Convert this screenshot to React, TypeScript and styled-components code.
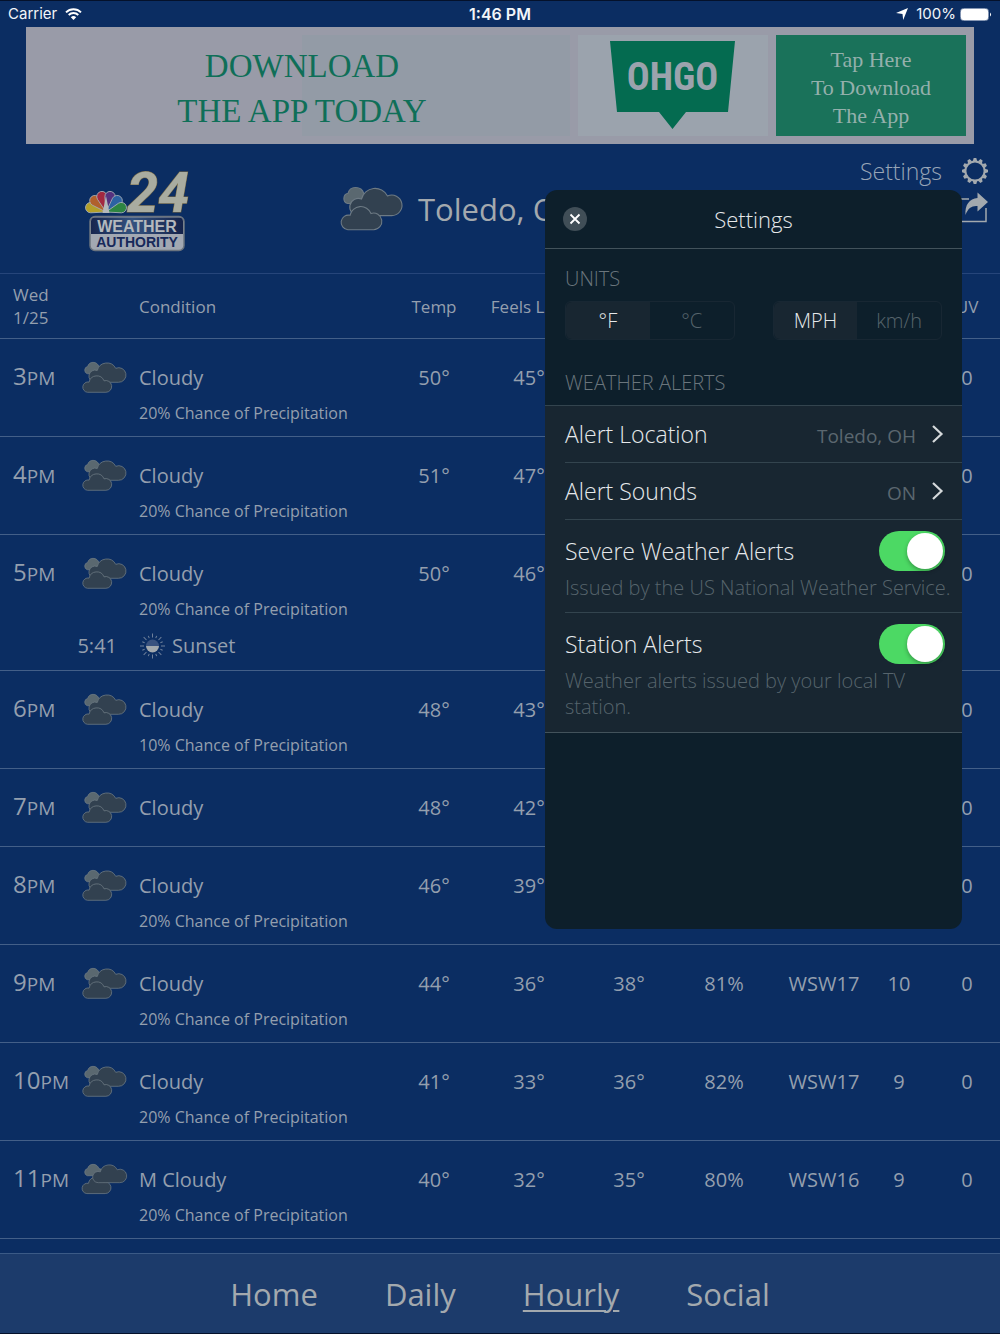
import React, { useState } from "react";
import styled, { createGlobalStyle } from "styled-components";

const color = {
  page: "#0b2d62",
  text: "#949fae",
  textStrong: "#a3a9ae",
  line: "#435f88",
  footer: "#1c3b6b",
  panel: "#0d1f2b",
  panelRow: "#182631",
  panelLine: "#33444e",
  panelText: "#e6e9eb",
  panelMuted: "#6a757c",
  panelFaint: "#56646c",
  green: "#4cd964",
};

const GlobalStyle = createGlobalStyle`
  *, *::before, *::after { box-sizing: border-box; }
  body {
    margin: 0;
    background: ${color.page};
    color: ${color.text};
    font-family: "Open Sans", "Noto Sans", sans-serif;
  }
  button, input { font: inherit; color: inherit; }
`;

const Page = styled.div`
  position: relative;
  display: flex;
  flex-direction: column;
  min-height: 100vh;
  border-top: 1px solid #04112b;
  border-bottom: 1px solid #04112b;
`;

const StatusBar = styled.div`
  display: grid;
  grid-template-columns: 1fr auto 1fr;
  align-items: center;
  height: 26px;
  padding: 0 8px;
  color: #f2f5f9;
  font: 400 15px/24px Inter, "Liberation Sans", sans-serif;
`;

const StatusGroup = styled.div<{ $end?: boolean }>`
  display: flex;
  align-items: center;
  justify-content: ${(p) => (p.$end ? "flex-end" : "flex-start")};
  gap: ${(p) => (p.$end ? 4 : 8)}px;
`;

const Clock = styled.span`
  font-size: 16px;
  font-weight: 600;
`;

const Banner = styled.a`
  display: flex;
  align-items: stretch;
  gap: 8px;
  height: 117px;
  margin: 0 26px;
  padding: 8px;
  background: #999ba8;
  text-decoration: none;
  font-family: "Liberation Serif", serif;
`;

const BannerTitle = styled.span`
  display: flex;
  flex: 1;
  flex-direction: column;
  justify-content: center;
  padding-top: 6px;
  background: linear-gradient(90deg, #999ba8 50%, #939ba6 50%);
  color: #0f6f58;
  font-size: 33px;
  line-height: 45px;
  text-align: center;
`;

const BannerLogo = styled.span`
  display: flex;
  justify-content: center;
  width: 190px;
  padding-top: 6px;
  background: #9ba3ad;
`;

const BannerAction = styled.span`
  display: flex;
  flex-direction: column;
  justify-content: center;
  width: 190px;
  padding-top: 4px;
  background: #1a725a;
  color: #94b0ac;
  font-size: 22px;
  line-height: 28px;
  text-align: center;
`;

const Header = styled.header`
  display: grid;
  grid-template-columns: 34% 1fr auto;
  height: 130px;
  border-bottom: 1px solid #26457a;
`;

const LogoBox = styled.div`
  padding: 13px 0 0 85px;
`;

const Place = styled.h1`
  display: flex;
  align-items: center;
  gap: 16px;
  height: 130px;
  margin: 0;
  color: ${color.textStrong};
  font-size: 31px;
  font-weight: 400;
  line-height: 44px;
`;

const Actions = styled.div`
  display: flex;
  flex-direction: column;
  align-items: flex-end;
  gap: 5px;
  padding: 11px 12px 0 0;
`;

const ActionButton = styled.button`
  display: flex;
  align-items: center;
  gap: 20px;
  padding: 0;
  border: 0;
  background: none;
  color: #98a5b7;
  font-size: 23px;
  font-weight: 300;
  line-height: 32px;
`;

const Table = styled.table`
  width: 100%;
  table-layout: fixed;
  border-collapse: separate;
  border-spacing: 0;
  font-size: 20px;
  line-height: 28px;
`;

const Col = styled.col<{ $w?: string }>`
  width: ${(p) => p.$w ?? "auto"};
`;

const HeadCell = styled.th<{ $left?: boolean }>`
  height: 65px;
  padding: 0 0 0 ${(p) => (p.$left ? 13 : 0)}px;
  border-bottom: 1px solid ${color.line};
  font-size: 17px;
  font-weight: 400;
  line-height: 23px;
  text-align: ${(p) => (p.$left ? "left" : "center")};
  white-space: nowrap;

  &:last-child { padding-left: 20px; }
`;

const Cell = styled.td<{ $open?: boolean }>`
  padding: 25px 0 24px;
  border-bottom: ${(p) => (p.$open ? "0" : `1px solid ${color.line}`)};
  text-align: center;
  vertical-align: top;
  white-space: nowrap;

  &:last-child { padding-left: 20px; }
`;

const TimeCell = styled(Cell).attrs({ as: "th", scope: "row" })`
  padding-top: 23px;
  padding-left: 13px;
  font-size: 24px;
  font-weight: 400;
  text-align: left;

  small {
    font-size: 19px;
    line-height: 19px;
  }
`;

const IconCell = styled(Cell)`
  padding-top: 23px;
  padding-bottom: 0;
  text-align: left;

  svg { display: block; }
`;

const ConditionCell = styled(Cell)<{ $detailed?: boolean }>`
  padding-left: 13px;
  padding-bottom: ${(p) => (p.$detailed ? 11 : 24)}px;
  text-align: left;
`;

const Detail = styled.div`
  padding-top: 9px;
  font-size: 16px;
  line-height: 24px;
`;

const EventCell = styled(Cell)<{ $align: "left" | "right" }>`
  padding: 0 ${(p) => (p.$align === "right" ? 9 : 0)}px 10px ${(p) => (p.$align === "left" ? 13 : 0)}px;
  text-align: ${(p) => p.$align};

  &:last-child { padding-left: 13px; }
`;

const EventLabel = styled.span`
  display: flex;
  align-items: center;
  gap: 6px;
`;

const Footer = styled.nav`
  display: flex;
  align-items: center;
  justify-content: center;
  gap: 67px;
  height: 80px;
  margin-top: auto;
  border-top: 1px solid #3b5a86;
  background: ${color.footer};
`;

const NavLink = styled.a<{ $current?: boolean }>`
  color: ${color.textStrong};
  font-size: 31px;
  line-height: 44px;
  text-decoration: ${(p) => (p.$current ? "underline" : "none")};
  text-decoration-thickness: 2px;
  text-underline-offset: 4px;
`;

const Panel = styled.section`
  position: absolute;
  top: 189px;
  right: 38px;
  width: 417px;
  height: 739px;
  overflow: hidden;
  border-radius: 12px;
  background: ${color.panel};
  color: ${color.panelText};
  font-weight: 300;
`;

const PanelHeader = styled.div`
  display: grid;
  grid-template-columns: 24px 1fr 24px;
  align-items: center;
  height: 59px;
  padding: 0 18px;
  border-bottom: 1px solid #42525b;
`;

const PanelTitle = styled.h2`
  margin: 0;
  font-size: 22px;
  font-weight: 300;
  line-height: 30px;
  text-align: center;
`;

const CloseButton = styled.button`
  display: grid;
  place-items: center;
  width: 24px;
  height: 24px;
  padding: 0;
  border: 0;
  border-radius: 50%;
  background: #404e57;
  color: #fff;
`;

const Units = styled.div`
  display: grid;
  grid-template-columns: 1fr 1fr;
  gap: 8px 38px;
  padding: 16px 20px 0;
`;

const SectionTitle = styled.h3<{ $wide?: boolean }>`
  grid-column: 1 / -1;
  margin: 0;
  padding: ${(p) => (p.$wide ? "29px 20px 8px" : "0")};
  color: ${color.panelMuted};
  font-size: 20px;
  font-weight: 300;
  line-height: 28px;
`;

const Segments = styled.fieldset`
  display: grid;
  grid-template-columns: 1fr 1fr;
  min-width: 0;
  height: 39px;
  margin: 0;
  padding: 0;
  overflow: hidden;
  border: 1px solid #182733;
  border-radius: 6px;
`;

const Segment = styled.label<{ $on: boolean }>`
  position: relative;
  display: grid;
  place-items: center;
  background: ${(p) => (p.$on ? color.panelRow : "transparent")};
  color: ${(p) => (p.$on ? color.panelText : color.panelFaint)};
  font-size: 20px;
  line-height: 28px;

  input {
    position: absolute;
    inset: 0;
    width: 100%;
    height: 100%;
    margin: 0;
    opacity: 0;
  }
`;

const AlertList = styled.div`
  padding-left: 20px;
  border-top: 1px solid ${color.panelLine};
  border-bottom: 1px solid #42525b;
  background: ${color.panelRow};
`;

const LinkRow = styled.button`
  display: flex;
  align-items: center;
  width: 100%;
  height: 57px;
  padding: 0 18px 0 0;
  border: 0;
  border-bottom: 1px solid ${color.panelLine};
  background: none;
  font-size: 23px;
  font-weight: 300;
  line-height: 32px;
  text-align: left;
`;

const RowValue = styled.span`
  margin-left: auto;
  padding: 3px 15px 0 0;
  color: #5b676f;
  font-size: 19px;
  font-weight: 400;
`;

const ToggleRow = styled.div<{ $last?: boolean }>`
  padding: 11px 0 ${(p) => (p.$last ? 12 : 11)}px;
  border-bottom: ${(p) => (p.$last ? "0" : `1px solid ${color.panelLine}`)};
`;

const ToggleLine = styled.label`
  display: flex;
  align-items: center;
  justify-content: space-between;
  height: 40px;
  padding-right: 17px;
  font-size: 23px;
  line-height: 32px;
`;

const Note = styled.p`
  margin: 0;
  padding-top: 4px;
  color: ${color.panelFaint};
  font-size: 20px;
  line-height: 26px;
`;

const Switch = styled.input`
  appearance: none;
  display: flex;
  flex: none;
  width: 66px;
  height: 40px;
  margin: 0;
  padding: 2px;
  border-radius: 20px;
  background: #3a4650;

  &::before {
    content: "";
    width: 36px;
    height: 36px;
    border-radius: 50%;
    background: #fff;
    box-shadow: 0 2px 4px rgba(0, 0, 0, 0.3);
  }
  &:checked {
    justify-content: flex-end;
    background: ${color.green};
  }
`;

const BACK = "M7.5 16.5A5.3 5.3 0 0 1 8 6.3C9 2.5 12 .5 15.5 .5c4.200 0 7.300 2.500 8.300 6a5 5 0 0 1 0 10Z";
const MAIN = "M18.3 28.6A8.600 8.600 0 1 1 21.500 12A14 14 0 0 1 47.500 8.900A10.300 10.300 0 1 1 51.300 28.600Z";
const FRONT = "M7.800 42.700A7.300 7.300 0 1 1 10 28.300A11 11 0 0 1 31 26.500A8.300 8.300 0 1 1 33.700 42.700Z";

function Clouds({ width, mostly }: { width: number; mostly?: boolean }) {
  return (
    <svg width={width} height={(width * 44) / 62} viewBox="0 0 62 44" overflow="visible" aria-hidden="true">
      <g stroke="#6d7a84" strokeWidth={1.1}>
        <path d={BACK} fill="#5a6870" />
        {mostly ? (
          <>
            <path d={FRONT} fill="#324150" transform="translate(-1 -1)" />
            <path d={MAIN} fill="#324150" transform="translate(6 0) scale(.92)" />
          </>
        ) : (
          <>
            <path d={MAIN} fill="#324150" />
            <path d={FRONT} fill="#324150" />
          </>
        )}
      </g>
    </svg>
  );
}

function SunsetIcon() {
  return (
    <svg width="27" height="26" viewBox="-13.500 -13 27 26" aria-hidden="true">
      <path d="M-6.500 0a6.500 6.500 0 0 1 13 0Z" fill="#39527f" />
      <path d="M-6.500 0a6.500 6.500 0 0 0 13 0Z" fill="#a3a9ae" />
      <g stroke="#6f809b" strokeWidth="1">
        {Array.from({ length: 16 }, (_, i) => (
          <path key={i} d={i % 2 ? "M0-8.500V-11" : "M0-8.500V-12.500"} transform={`rotate(${i * 22.5})`} />
        ))}
      </g>
    </svg>
  );
}

function GearIcon() {
  return (
    <svg width="26" height="26" viewBox="-13 -13 26 26" aria-hidden="true">
      <circle r="9.600" fill="none" stroke="#a3a9ae" strokeWidth="2" />
      {Array.from({ length: 12 }, (_, i) => (
        <path key={i} d="M-2.200-10L-1.300-13H1.300L2.200-10Z" fill="#a3a9ae" transform={`rotate(${i * 30})`} />
      ))}
    </svg>
  );
}

function ShareIcon() {
  return (
    <svg width="34" height="32" viewBox="0 0 34 32" aria-hidden="true">
      <path d="M15 7H2v22.500h30V16" fill="none" stroke="#a3a9ae" strokeWidth="1.500" />
      <path d="M23.500 .5L34 10 23.500 19.500V14c-5.500-.5-9.500 2-12 9-.8-10 4-16.500 12-17Z" fill="#a3a9ae" />
    </svg>
  );
}

function WifiIcon() {
  return (
    <svg width="17" height="12" viewBox="0 0 17 12" fill="none" stroke="#fff" strokeWidth="1.900" aria-hidden="true">
      <path d="M1 4.300a10.600 10.600 0 0 1 15 0M3.700 7a6.800 6.800 0 0 1 9.600 0" />
      <path d="M8.500 12L5.800 9.300a3.800 3.800 0 0 1 5.400 0Z" fill="#fff" stroke="none" />
    </svg>
  );
}

function StationLogo() {
  const petals = ["#b3a02a", "#b0602c", "#a32840", "#56317f", "#2c62a3", "#2d8542"];
  return (
    <svg width="116" height="96" viewBox="0 -10 116 96" role="img" aria-label="24 Weather Authority">
      <defs>
        <linearGradient id="plate" x1="0" y1="0" x2="1" y2="0">
          <stop offset="0" stopColor="#17264f" />
          <stop offset=".45" stopColor="#34527f" />
          <stop offset="1" stopColor="#14224a" />
        </linearGradient>
      </defs>
      {petals.map((fill, i) => (
        <path
          key={fill}
          d="M0 0L-5-14.500A5.200 5.200 0 1 1 5-14.500Z"
          fill={fill}
          stroke="#a9b0b6"
          strokeWidth=".8"
          transform={`translate(21 45) rotate(${-74 + i * 29.6})`}
        />
      ))}
      <path d="M21 29L17.500 46H24.500Z" fill="#b4b8ba" />
      <text x="42" y="45" fontSize="56" fontStyle="italic" fontWeight="700" fill="#a9aca0" stroke="#7b6a41" strokeWidth="1" paintOrder="stroke" fontFamily='Roboto, "Liberation Sans", sans-serif'>24</text>
      <rect x="5" y="49.500" width="94" height="34" rx="5" fill="#a2a8b2" stroke="#6b747f" strokeWidth="1.500" />
      <path d="M6 67V54.500a4 4 0 0 1 4-4h84a4 4 0 0 1 4 4V67Z" fill="url(#plate)" />
      <g fontFamily='"Liberation Sans", sans-serif' fontWeight="700" textAnchor="middle">
        <text x="52" y="65" fontSize="16" fill="#b4b9bd">WEATHER</text>
        <text x="52" y="80" fontSize="14" fill="#17295a">AUTHORITY</text>
      </g>
    </svg>
  );
}

type Hour = {
  time: string;
  sky: string;
  chance?: string;
  event?: { time: string; label: string };
  values: string[];
};

const hours: Hour[] = [
  { time: "3", sky: "Cloudy", chance: "20%", values: ["50°", "45°", "", "", "", "", "0"] },
  { time: "4", sky: "Cloudy", chance: "20%", values: ["51°", "47°", "", "", "", "", "0"] },
  { time: "5", sky: "Cloudy", chance: "20%", event: { time: "5:41", label: "Sunset" }, values: ["50°", "46°", "", "", "", "", "0"] },
  { time: "6", sky: "Cloudy", chance: "10%", values: ["48°", "43°", "", "", "", "", "0"] },
  { time: "7", sky: "Cloudy", values: ["48°", "42°", "", "", "", "", "0"] },
  { time: "8", sky: "Cloudy", chance: "20%", values: ["46°", "39°", "", "", "", "", "0"] },
  { time: "9", sky: "Cloudy", chance: "20%", values: ["44°", "36°", "38°", "81%", "WSW17", "10", "0"] },
  { time: "10", sky: "Cloudy", chance: "20%", values: ["41°", "33°", "36°", "82%", "WSW17", "9", "0"] },
  { time: "11", sky: "M Cloudy", chance: "20%", values: ["40°", "32°", "35°", "80%", "WSW16", "9", "0"] },
];

const columnWidths = ["8.2%", "4.4%", "25.8%", "10%", "9%", "11%", "8%", "12%", "3%", "auto"];

function HourRows({ hour }: { hour: Hour }) {
  const open = Boolean(hour.event);
  return (
    <>
      <tr>
        <TimeCell $open={open}>{hour.time}<small>PM</small></TimeCell>
        <IconCell $open={open}><Clouds width={44} mostly={hour.sky === "M Cloudy"} /></IconCell>
        <ConditionCell $open={open} $detailed={Boolean(hour.chance)}>
          {hour.sky}
          {hour.chance && <Detail>{hour.chance} Chance of Precipitation</Detail>}
        </ConditionCell>
        {hour.values.map((value, i) => (
          <Cell key={i} $open={open}>{value}</Cell>
        ))}
      </tr>
      {hour.event && (
        <tr>
          <EventCell colSpan={2} $align="right">{hour.event.time}</EventCell>
          <EventCell colSpan={8} $align="left">
            <EventLabel><SunsetIcon />{hour.event.label}</EventLabel>
          </EventCell>
        </tr>
      )}
    </>
  );
}

function UnitPicker({ name, options }: { name: string; options: string[] }) {
  const [selected, setSelected] = useState(options[0]);
  return (
    <Segments aria-label={name}>
      {options.map((option) => (
        <Segment key={option} $on={option === selected}>
          <input type="radio" name={name} checked={option === selected} onChange={() => setSelected(option)} />
          {option}
        </Segment>
      ))}
    </Segments>
  );
}

function AlertLink({ title, value }: { title: string; value: string }) {
  return (
    <LinkRow type="button">
      {title}
      <RowValue>{value}</RowValue>
      <svg width="13" height="18" viewBox="0 0 13 18" fill="none" stroke="#d5d9db" strokeWidth="2.200" aria-hidden="true">
        <path d="M2 1l8.500 8L2 17" />
      </svg>
    </LinkRow>
  );
}

function AlertToggle({ title, note, last }: { title: string; note: string; last?: boolean }) {
  return (
    <ToggleRow $last={last}>
      <ToggleLine>
        {title}
        <Switch type="checkbox" role="switch" defaultChecked />
      </ToggleLine>
      <Note>{note}</Note>
    </ToggleRow>
  );
}

function SettingsPanel() {
  return (
    <Panel role="dialog" aria-labelledby="settings-title">
      <PanelHeader>
        <CloseButton type="button" aria-label="Close">
          <svg width="12" height="12" viewBox="0 0 12 12" stroke="currentColor" strokeWidth="1.800" aria-hidden="true">
            <path d="M1.500 1.500l9 9M10.500 1.500l-9 9" />
          </svg>
        </CloseButton>
        <PanelTitle id="settings-title">Settings</PanelTitle>
      </PanelHeader>
      <Units>
        <SectionTitle>UNITS</SectionTitle>
        <UnitPicker name="Temperature" options={["°F", "°C"]} />
        <UnitPicker name="Wind speed" options={["MPH", "km/h"]} />
      </Units>
      <SectionTitle $wide>WEATHER ALERTS</SectionTitle>
      <AlertList>
        <AlertLink title="Alert Location" value="Toledo, OH" />
        <AlertLink title="Alert Sounds" value="ON" />
        <AlertToggle title="Severe Weather Alerts" note="Issued by the US National Weather Service." />
        <AlertToggle title="Station Alerts" note="Weather alerts issued by your local TV station." last />
      </AlertList>
    </Panel>
  );
}

export default function App() {
  return (
    <>
      <GlobalStyle />
      <Page>
        <StatusBar>
          <StatusGroup>Carrier<WifiIcon /></StatusGroup>
          <Clock>1:46 PM</Clock>
          <StatusGroup $end>
            <svg width="12" height="12" viewBox="0 0 12 12" fill="#fff" aria-hidden="true">
              <path d="M12 0L7.200 12 6.500 6 0 5Z" />
            </svg>
            <span>&nbsp;100%</span>
            <svg width="32" height="13" viewBox="0 0 32 13" aria-hidden="true">
              <rect x=".5" y=".5" width="28" height="12" rx="3" fill="none" stroke="#8596b3" />
              <rect x="1" y="1" width="27" height="11" rx="2" fill="#fff" />
              <path d="M30 4.500a2.500 2.500 0 0 1 0 4Z" fill="#fff" />
            </svg>
          </StatusGroup>
        </StatusBar>

        <Banner href="#download">
          <BannerTitle>
            <span>DOWNLOAD</span>
            <span>THE APP TODAY</span>
          </BannerTitle>
          <BannerLogo>
            <svg width="126" height="90" viewBox="0 0 126 90" role="img" aria-label="OHGO">
              <path d="M0 0H125L118 71H76L62.500 88 49 71H7Z" fill="#046b50" />
              <text x="62.500" y="49" textAnchor="middle" fontSize="38" fontWeight="700" fill="#9ba3ad" fontFamily='"Roboto Condensed", "Liberation Sans Narrow", sans-serif'>OHGO</text>
            </svg>
          </BannerLogo>
          <BannerAction>
            <span>Tap Here</span>
            <span>To Download</span>
            <span>The App</span>
          </BannerAction>
        </Banner>

        <Header>
          <LogoBox><StationLogo /></LogoBox>
          <Place><Clouds width={62} />Toledo, OH</Place>
          <Actions>
            <ActionButton type="button">Settings<GearIcon /></ActionButton>
            <ActionButton type="button" aria-label="Share"><ShareIcon /></ActionButton>
          </Actions>
        </Header>

        <Table>
          <colgroup>
            {columnWidths.map((w, i) => <Col key={i} $w={w} />)}
          </colgroup>
          <thead>
            <tr>
              <HeadCell scope="col" colSpan={2} $left>Wed<br />1/25</HeadCell>
              <HeadCell scope="col" $left>Condition</HeadCell>
              <HeadCell scope="col">Temp</HeadCell>
              <HeadCell scope="col">Feels Like</HeadCell>
              <HeadCell colSpan={4} />
              <HeadCell scope="col">UV</HeadCell>
            </tr>
          </thead>
          <tbody>
            {hours.map((hour) => <HourRows key={hour.time} hour={hour} />)}
          </tbody>
        </Table>

        <Footer>
          <NavLink href="#home">Home</NavLink>
          <NavLink href="#daily">Daily</NavLink>
          <NavLink href="#hourly" $current aria-current="page">Hourly</NavLink>
          <NavLink href="#social">Social</NavLink>
        </Footer>

        <SettingsPanel />
      </Page>
    </>
  );
}
